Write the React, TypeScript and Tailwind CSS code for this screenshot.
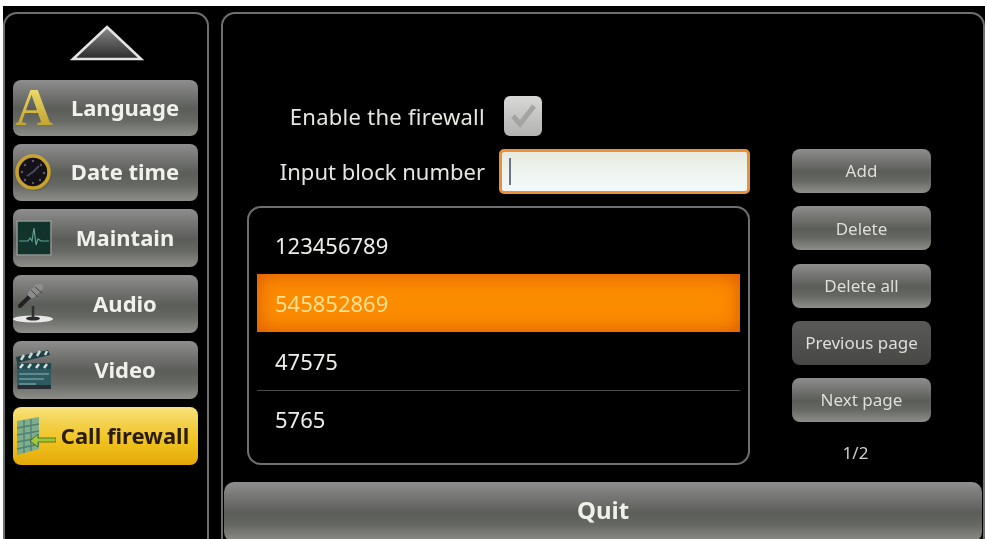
import React from "react";

const grayBtn =
  "bg-[linear-gradient(to_bottom,#8e8e8e_0%,#787976_22%,#5b5d59_52%,#666864_72%,#8d8e8a_100%)]";

function ClockIcon() {
  return (
    <svg className="shrink-0" width="38" height="40" viewBox="0 0 38 40">
      <circle cx="20" cy="21" r="17" fill="#5f5a44" opacity="0.5" />
      <circle cx="18" cy="19" r="16" fill="#141216" stroke="#c9a22e" strokeWidth="3.5" />
      <g fill="#5c5a78">
        <circle cx="18" cy="8" r="1.2" />
        <circle cx="26" cy="12" r="1.2" />
        <circle cx="29" cy="20" r="1.2" />
        <circle cx="25" cy="27" r="1.2" />
        <circle cx="18" cy="30" r="1.2" />
        <circle cx="10" cy="27" r="1.2" />
        <circle cx="7" cy="19" r="1.2" />
        <circle cx="10" cy="12" r="1.2" />
      </g>
      <path d="M18 19 L24 13 M18 19 L12 23" stroke="#4a4860" strokeWidth="2" />
    </svg>
  );
}

function MonitorIcon() {
  return (
    <svg className="shrink-0" width="36" height="36" viewBox="0 0 36 36">
      <rect x="1" y="1" width="34" height="34" fill="#12322c" stroke="#8f9490" strokeWidth="1.5" />
      <path d="M3 21 H12 L14 18 L16 21 L18 8 L20 25 L22 19 L25 21 H33" fill="none" stroke="#5fa08e" strokeWidth="1.2" />
    </svg>
  );
}

function MicIcon() {
  return (
    <svg className="shrink-0" width="44" height="40" viewBox="0 0 44 40">
      <ellipse cx="21" cy="35" rx="20" ry="3.5" fill="#e8e8e8" />
      <ellipse cx="21" cy="34.5" rx="7" ry="2" fill="#2a2a2a" />
      <path d="M21 34 V22" stroke="#2e2e2e" strokeWidth="2.5" />
      <path d="M8 22 L21 9" stroke="#222" strokeWidth="4" strokeLinecap="round" />
      <path d="M20 10 L27 3" stroke="#8d8d8d" strokeWidth="8" strokeLinecap="round" />
      <path d="M19 6 L26 13 M23 3 L30 9" stroke="#444" strokeWidth="1" />
    </svg>
  );
}

function ClapperIcon() {
  return (
    <svg className="shrink-0" width="36" height="40" viewBox="0 0 36 40">
      <path d="M1 13 L34 5 L32 0 L0 7 Z" fill="#1e3f44" />
      <path d="M5 10 L8 5 M13 8 L16 3 M21 6 L24 1 M29 5 L31 1" stroke="#cfd8d8" strokeWidth="2.5" />
      <rect x="1" y="13" width="34" height="6" fill="#1f4a50" />
      <path d="M4 18 L7 14 M12 18 L15 14 M20 18 L23 14 M28 18 L31 14" stroke="#d5dddd" strokeWidth="2.5" />
      <rect x="1" y="19" width="34" height="20" fill="#2d5a60" />
      <path d="M3 24 H33 M3 29 H28 M3 34 H20" stroke="#5f8a8c" strokeWidth="2" />
      <rect x="2" y="35" width="33" height="4" fill="#2a2a34" />
    </svg>
  );
}

function FirewallIcon() {
  return (
    <svg className="ml-[3px] shrink-0" width="40" height="38" viewBox="0 0 40 38">
      <path d="M1 4 L23 0 V32 L1 38 Z" fill="#7fae8a" />
      <path d="M1 11 L23 7 M1 18 L23 14 M1 25 L23 21 M1 32 L23 27 M8 3 V36 M15 2 V34" stroke="#4f7f76" strokeWidth="1.3" />
      <path d="M14 24 L22 17 V21 H40 V25 H22 V30 Z" fill="#9fc93a" stroke="#2a3a10" strokeWidth="0.6" />
    </svg>
  );
}

const menu = [
  {
    label: "Language",
    h: "h-[56px]",
    icon: (
      <span className="bg-gradient-to-b from-[#f6e678] to-[#b8961a] bg-clip-text font-['Liberation_Serif',serif] text-[52px] font-bold leading-none text-transparent">
        A
      </span>
    ),
  },
  { label: "Date time", h: "h-[57px]", icon: <ClockIcon /> },
  { label: "Maintain", h: "h-[58px]", icon: <MonitorIcon /> },
  { label: "Audio", h: "h-[58px]", icon: <MicIcon /> },
  { label: "Video", h: "h-[58px]", icon: <ClapperIcon /> },
  { label: "Call firewall", h: "h-[58px]", icon: <FirewallIcon />, active: true },
];

const numbers = ["123456789", "545852869", "47575", "5765"];

const sideButtons = [
  { label: "Add" },
  { label: "Delete" },
  { label: "Delete all" },
  { label: "Previous page", dark: true },
  { label: "Next page" },
];

export default function App() {
  return (
    <div className="h-[539px] w-[987px] overflow-hidden bg-white pl-[3px] pr-[2px] pt-[6px] font-['Noto_Sans',sans-serif] blur-[0.5px]">
      <div className="flex h-[545px] gap-[12px] bg-black pt-[6px]">
        {/* Left menu */}
        <div className="flex w-[206px] shrink-0 flex-col rounded-[14px] border-2 border-[#6f6f6f]">
          <svg className="ml-[65px] mt-[11px] shrink-0" width="74" height="36" viewBox="0 0 74 36">
            <defs>
              <linearGradient id="tri" x1="0" y1="0" x2="0" y2="1">
                <stop offset="0" stopColor="#8a8a8a" />
                <stop offset="1" stopColor="#2a2a2a" />
              </linearGradient>
            </defs>
            <polygon points="37,2 71,34 3,34" fill="url(#tri)" stroke="#e4e4e4" strokeWidth="2.5" />
          </svg>
          <div className="ml-[8px] mr-[9px] mt-[19px] flex flex-col gap-[8px]">
            {menu.map((item) => (
              <div
                key={item.label}
                className={`flex ${item.h} items-center rounded-[8px] ${
                  item.active
                    ? "bg-[linear-gradient(to_bottom,#f6e27c_0%,#f3d04a_30%,#f0c21e_60%,#e3a808_100%)] text-[#2a1c04]"
                    : `${grayBtn} text-[#f0f0ec]`
                }`}
              >
                <div className="flex w-[39px] shrink-0 items-center justify-center pl-[3px]">{item.icon}</div>
                <div className="flex-1 whitespace-nowrap pb-[2px] text-center text-[22px] font-bold">{item.label}</div>
              </div>
            ))}
          </div>
        </div>

        {/* Right panel */}
        <div className="flex flex-1 flex-col rounded-[14px] border-2 border-[#6f6f6f] px-px">
          <div className="flex gap-[42px] pl-[23px] pt-[82px]">
            <div className="w-[503px] shrink-0 text-[#e6e6e2]">
              <div className="flex h-[40px] items-center">
                <div className="w-[238px] text-right text-[22px] tracking-[0.27px]">Enable the firewall</div>
                <div className="ml-[19px] flex h-[40px] w-[38px] items-center justify-center rounded-[6px] bg-gradient-to-b from-[#d8d8d6] to-[#b2b2b0]">
                  <svg width="30" height="30" viewBox="0 0 30 30">
                    <path d="M5 15 L12 23 L26 5" fill="none" stroke="#a4a4a2" strokeWidth="5" />
                  </svg>
                </div>
              </div>
              <div className="mt-[13px] flex h-[45px] items-center">
                <div className="w-[238px] text-right text-[22px]">Input block number</div>
                <div className="ml-[14px] flex h-[45px] flex-1 items-center rounded-[5px] border-[3px] border-[#e8913a] bg-[linear-gradient(to_bottom,#e6eadf_0%,#eef4ee_50%,#f2f9fa_100%)] pl-[7px]">
                  <div className="h-[27px] w-[2px] bg-[#6a7488]" />
                </div>
              </div>
              <div className="mt-[12px] h-[259px] rounded-[14px] border-2 border-[#6f6f6f] px-[8px] pt-[8px]">
                {numbers.map((n, i) => (
                  <div
                    key={n}
                    className={`flex h-[58px] items-center pl-[18px] text-[22px] ${
                      i === 1
                        ? "bg-[#fb8c00] text-[#ffdf90] shadow-[inset_0_0_20px_#d95400]"
                        : "text-[#ededea]"
                    } ${i === 3 ? "border-t border-[#4a4a4a]" : ""}`}
                  >
                    {n}
                  </div>
                ))}
              </div>
            </div>

            <div className="mt-[53px] w-[139px] shrink-0">
              <div className="flex flex-col gap-[13.25px]">
                {sideButtons.map((b) => (
                  <div
                    key={b.label}
                    className={`flex h-[44px] items-center justify-center rounded-[8px] whitespace-nowrap text-[17px] text-[#dfdfda] ${
                      b.dark ? "bg-[linear-gradient(to_bottom,#5a5a58,#474846)]" : grayBtn
                    }`}
                  >
                    {b.label}
                  </div>
                ))}
              </div>
              <div className="mt-[21px] pr-[12px] text-center text-[17px] leading-[20px] text-[#cfcfcb]">1/2</div>
            </div>
          </div>

          <div
            className={`mt-[17px] flex h-[60px] items-center justify-center rounded-[10px] pb-[4px] text-[24px] font-bold text-[#f0f0ea] ${grayBtn}`}
          >
            Quit
          </div>
        </div>
      </div>
    </div>
  );
}
